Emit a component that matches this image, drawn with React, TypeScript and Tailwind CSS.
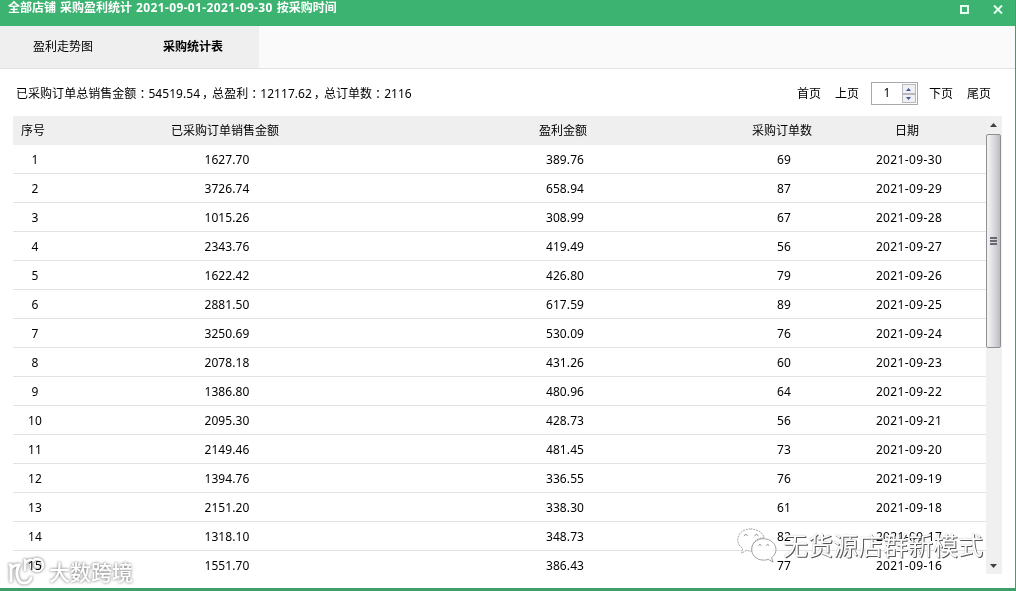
import React, { useState } from "react";

interface StatRow {
    amount: string;
    profit: string;
    orders: number;
    date: string;
}

const rows: StatRow[] = [
    { amount: "1627.70", profit: "389.76", orders: 69, date: "2021-09-30" },
    { amount: "3726.74", profit: "658.94", orders: 87, date: "2021-09-29" },
    { amount: "1015.26", profit: "308.99", orders: 67, date: "2021-09-28" },
    { amount: "2343.76", profit: "419.49", orders: 56, date: "2021-09-27" },
    { amount: "1622.42", profit: "426.80", orders: 79, date: "2021-09-26" },
    { amount: "2881.50", profit: "617.59", orders: 89, date: "2021-09-25" },
    { amount: "3250.69", profit: "530.09", orders: 76, date: "2021-09-24" },
    { amount: "2078.18", profit: "431.26", orders: 60, date: "2021-09-23" },
    { amount: "1386.80", profit: "480.96", orders: 64, date: "2021-09-22" },
    { amount: "2095.30", profit: "428.73", orders: 56, date: "2021-09-21" },
    { amount: "2149.46", profit: "481.45", orders: 73, date: "2021-09-20" },
    { amount: "1394.76", profit: "336.55", orders: 76, date: "2021-09-19" },
    { amount: "2151.20", profit: "338.30", orders: 61, date: "2021-09-18" },
    { amount: "1318.10", profit: "348.73", orders: 82, date: "2021-09-17" },
    { amount: "1551.70", profit: "386.43", orders: 77, date: "2021-09-16" },
]

const columns = "grid grid-cols-[40px_344px_332px_106px_144px] text-center"

function TitleBar() {
    return (
        <div className="flex h-[26px] shrink-0 justify-between bg-[#3cb371] pl-2 text-white">
            <h1 className="h-4 text-[12px] leading-4 font-bold whitespace-nowrap [word-spacing:0.9px]">
                全部店铺 采购盈利统计 <span className="tracking-[0.37px]">2021-09-01-2021-09-30</span> 按采购时间
            </h1>
            <div className="flex items-start gap-6 pt-[5px] pr-3">
                <button aria-label="最大化">
                    <svg className="block h-[9px] w-[9px]" viewBox="0 0 9 9" fill="none" stroke="#e4fff0" strokeWidth="2">
                        <path d="M1 1h7v7H1z" />
                    </svg>
                </button>
                <button aria-label="关闭">
                    <svg className="block h-[9px] w-[10px]" viewBox="0 0 10 9" fill="none" stroke="#e4fff0" strokeWidth="2">
                        <path d="M1 .5l8 8M9 .5l-8 8" />
                    </svg>
                </button>
            </div>
        </div>
    )
}

function Colon() {
    return <span className="mr-[-3px] pl-[3px]">：</span>
}

function Comma() {
    return <span className="mr-[-2px] pl-[2px]">，</span>
}

function Pager({ page, onChange }: { page: number; onChange: (page: number) => void }) {
    return (
        <div className="flex items-center">
            <button className="mr-[14px]" onClick={() => onChange(1)}>首页</button>
            <button className="mr-3" onClick={() => onChange(Math.max(1, page - 1))}>上页</button>
            <div className="mr-[11px] flex h-[23px] w-[47px] border border-[#a9a9ad] bg-white">
                <span className="w-[30px] text-center leading-[20px]">{page}</span>
                <div className="flex w-[14px] flex-col py-px">
                    <button className="flex h-[10px] items-center justify-center border border-[#b8b8be] bg-[#f0f0f2]" onClick={() => onChange(page + 1)}>
                        <svg className="h-[3px] w-[5px]" viewBox="0 0 5 3" fill="#4b52a0"><path d="M0 3h5L2.5 0z" /></svg>
                    </button>
                    <button className="flex h-[9px] items-center justify-center border border-[#b8b8be] bg-[#f0f0f2]" onClick={() => onChange(Math.max(1, page - 1))}>
                        <svg className="h-[3px] w-[5px]" viewBox="0 0 5 3" fill="#4b52a0"><path d="M0 0h5L2.5 3z" /></svg>
                    </button>
                </div>
            </div>
            <button className="mr-[14px]" onClick={() => onChange(page + 1)}>下页</button>
            <button>尾页</button>
        </div>
    )
}

function Scrollbar() {
    return (
        <div className="flex w-4 shrink-0 flex-col items-start bg-[#f0f0f0]">
            <svg className="mt-[7px] ml-1 h-1 w-[7px] shrink-0" viewBox="0 0 7 4" fill="#404040"><path d="M0 4h7L3.5 0z" /></svg>
            <div className="mt-[7px] flex h-[214px] w-[15px] shrink-0 flex-col items-center justify-center gap-px rounded-[2px] border border-[#8e8e93] bg-linear-to-r from-[#f5f5f6] via-[#dcdce0] to-[#bcbdc3]">
                <span className="h-[2px] w-[7px] bg-[#68686e]" />
                <span className="h-[2px] w-[7px] bg-[#68686e]" />
                <span className="h-[2px] w-[7px] bg-[#68686e]" />
            </div>
            <svg className="mt-auto mb-[6px] ml-1 h-1 w-[7px] shrink-0" viewBox="0 0 7 4" fill="#404040"><path d="M0 0h7L3.5 4z" /></svg>
        </div>
    )
}

function Watermarks() {
    return (
        <>
            {/* multiply 保留阴影，不遮住下面的数字 */}
            <div className="pointer-events-none absolute top-[557px] left-[8px] flex items-center text-white mix-blend-multiply drop-shadow-[0_0_1.5px_#666]">
                <svg className="h-[30px] w-[38px]" viewBox="0 0 38 30" fill="none" stroke="white" strokeWidth="3" strokeLinecap="round" strokeLinejoin="round">
                    <path d="M2 8h1v16M3 12q2-4 8-4" />
                    <path d="M11 8C7 15 9 26 16 26c4 0 6-2 7-5" />
                    <path d="M17 3v10M17 7q2-4 6-4" strokeWidth="2.5" />
                    <circle cx="29" cy="8" r="6" strokeWidth="2.5" />
                </svg>
                <span className="ml-[3px] text-[21px] leading-[30px] font-medium">大数跨境</span>
            </div>
            <div className="pointer-events-none absolute top-[528px] left-[737px] flex text-white">
                <svg className="h-[35px] w-[40px]" viewBox="0 0 41 36" fill="white" fillOpacity=".75" stroke="#888" strokeWidth=".8">
                    <path strokeDasharray="2 1" d="M14 1C6 1 .7 6 .7 12c0 4 2 7 5 9l-1 5 5-3c2 .7 4 1 6 .7C14 16 20 10 28 10 26 4 20 1 14 1z" />
                    <path d="M27 11c-7 0-12 5-12 11s5 11 12 11c2 0 3 0 5-.8l5 2.800-1.500-4.500c3-2 4.500-5 4.500-8.500C40 16 34 11 27 11z" />
                    <path d="M7 8q2-3 4 0M18 8q2-3 4 0M22 18q1.500-2 3 0M30 18q1.500-2 3 0" fill="none" stroke="#666" />
                </svg>
                <span className="mt-[-2px] ml-[6px] text-[25px] leading-[38px] [text-shadow:1px_1px_0_#555,0_0_1px_#999]">无货源店群新模式</span>
            </div>
        </>
    )
}

function App() {
    const [tab, setTab] = useState(1)
    const [page, setPage] = useState(1)
    const tabs = ["盈利走势图", "采购统计表"]

    return (
        <div className="relative flex h-[591px] w-[1016px] flex-col overflow-hidden border-r border-b-3 border-r-[#3f9f6a] border-b-[#3f9f6a] bg-white font-['Noto_Sans','Noto_Sans_CJK_SC',sans-serif] text-[12px] text-black">
            <TitleBar />

            {/* 标签页 */}
            <div className="flex h-[43px] shrink-0 border-b border-[#e2e2e2] bg-[#fafafa]">
                <div className="flex w-[259px] bg-[#efefef] pr-[1px]">
                    {tabs.map((label, idx) => (
                        <button
                            key={label}
                            className={idx === tab ? "w-[130px] shrink-0 pr-1 font-bold" : "w-[130px] shrink-0 pr-1"}
                            onClick={() => setTab(idx)}
                        >
                            {label}
                        </button>
                    ))}
                </div>
            </div>

            {/* 汇总与分页 */}
            <div className="flex h-[47px] shrink-0 items-center justify-between pt-[2px] pr-6 pl-4">
                <p className="tracking-[0.04px]">
                    已采购订单总销售金额<Colon />54519.54<Comma />总盈利<Colon />12117.62<Comma />总订单数<Colon />2116
                </p>
                <Pager page={page} onChange={setPage} />
            </div>

            {/* 统计表 */}
            <div className="mr-[13px] ml-[13px] flex h-[458px] shrink-0 overflow-hidden">
                <div className="w-[973px] shrink-0">
                    <div className={`${columns} h-[29px] bg-[#efefef] leading-[30px]`}>
                        <span>序号</span>
                        <span>已采购订单销售金额</span>
                        <span>盈利金额</span>
                        <span>采购订单数</span>
                        <span>日期</span>
                    </div>
                    {rows.map((row, idx) => (
                        <div key={row.date} className={`${columns} h-[29px] border-b border-[#e2e2e2] pl-[2px] leading-[29px] tracking-[0.1px]`}>
                            <span>{idx + 1}</span>
                            <span>{row.amount}</span>
                            <span>{row.profit}</span>
                            <span>{row.orders}</span>
                            <span className="tracking-[0.36px]">{row.date}</span>
                        </div>
                    ))}
                </div>
                <Scrollbar />
            </div>

            <Watermarks />
        </div>
    )
}

export default App
